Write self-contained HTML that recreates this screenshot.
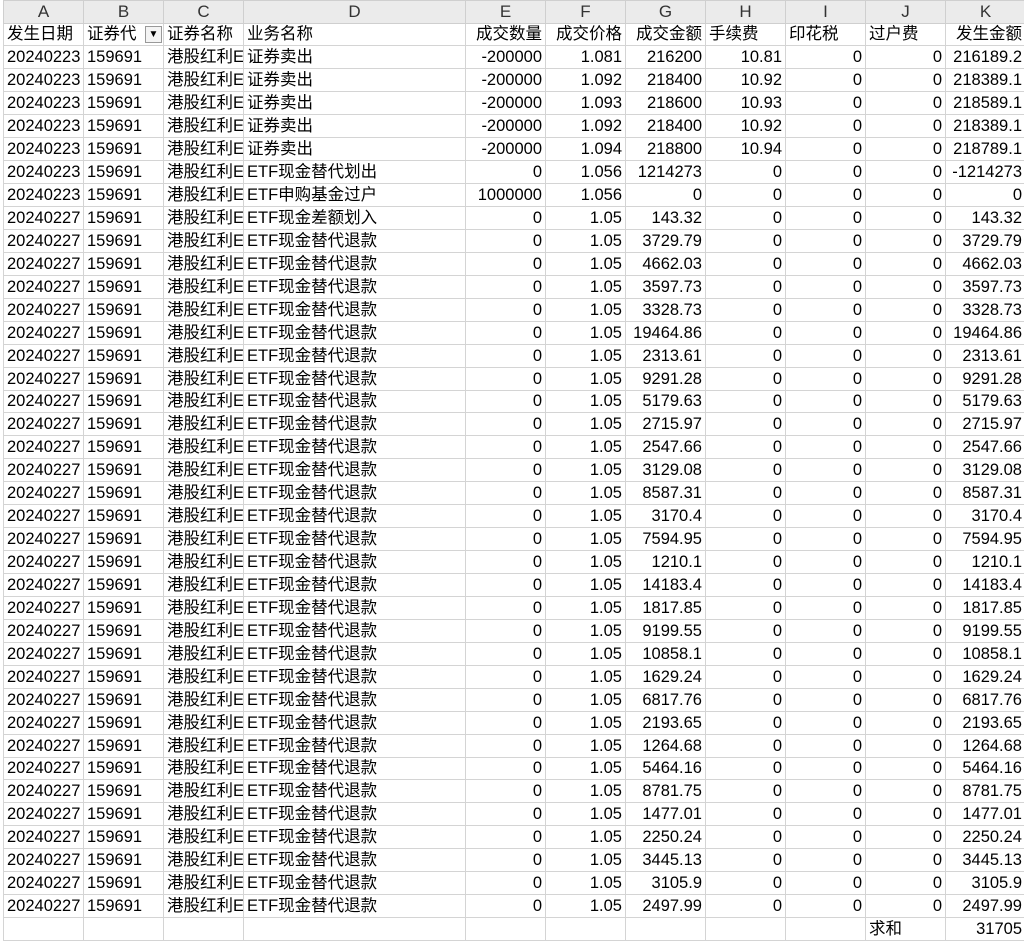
<!DOCTYPE html>
<html><head><meta charset="utf-8"><style>
body{margin:0;background:#fff;overflow:hidden;width:1024px;height:944px}
table{border-collapse:collapse;table-layout:fixed;width:1022px;font-family:"Liberation Sans","Noto Sans CJK SC",sans-serif;font-size:16.5px;color:#000;position:absolute;left:3px;top:0}
td{border:1px solid #d4d4d4;height:22.95px;padding:0 3px 0 3px;white-space:nowrap;overflow:hidden;text-align:right;line-height:20px;box-sizing:border-box}
tr.h td{background:#ebebeb;text-align:center;border-color:#cfcfcf;height:22.5px;color:#333;font-size:17px}
td.l{text-align:left}
td.c{text-overflow:clip;padding-right:0}
.f{position:relative}
.fb{position:absolute;right:1px;top:2px;width:17px;height:17px;border:1px solid #999;background:#f4f4f4;box-sizing:border-box;font-size:10px;line-height:15px;text-align:center}
</style></head><body>
<table>
<colgroup><col style="width:80px"><col style="width:80px"><col style="width:80px"><col style="width:222px"><col style="width:80px"><col style="width:80px"><col style="width:80px"><col style="width:80px"><col style="width:80px"><col style="width:80px"><col style="width:80px"></colgroup>
<tr class="h"><td>A</td><td>B</td><td>C</td><td>D</td><td>E</td><td>F</td><td>G</td><td>H</td><td>I</td><td>J</td><td>K</td></tr>
<tr><td class="l">发生日期</td><td class="l f">证券代<span class="fb">▼</span></td><td class="l">证券名称</td><td class="l">业务名称</td><td>成交数量</td><td>成交价格</td><td>成交金额</td><td class="l">手续费</td><td class="l">印花税</td><td class="l">过户费</td><td>发生金额</td></tr>
<tr><td class="l">20240223</td><td class="l">159691</td><td class="l c">港股红利E</td><td class="l">证券卖出</td><td>-200000</td><td>1.081</td><td>216200</td><td>10.81</td><td>0</td><td>0</td><td>216189.2</td></tr>
<tr><td class="l">20240223</td><td class="l">159691</td><td class="l c">港股红利E</td><td class="l">证券卖出</td><td>-200000</td><td>1.092</td><td>218400</td><td>10.92</td><td>0</td><td>0</td><td>218389.1</td></tr>
<tr><td class="l">20240223</td><td class="l">159691</td><td class="l c">港股红利E</td><td class="l">证券卖出</td><td>-200000</td><td>1.093</td><td>218600</td><td>10.93</td><td>0</td><td>0</td><td>218589.1</td></tr>
<tr><td class="l">20240223</td><td class="l">159691</td><td class="l c">港股红利E</td><td class="l">证券卖出</td><td>-200000</td><td>1.092</td><td>218400</td><td>10.92</td><td>0</td><td>0</td><td>218389.1</td></tr>
<tr><td class="l">20240223</td><td class="l">159691</td><td class="l c">港股红利E</td><td class="l">证券卖出</td><td>-200000</td><td>1.094</td><td>218800</td><td>10.94</td><td>0</td><td>0</td><td>218789.1</td></tr>
<tr><td class="l">20240223</td><td class="l">159691</td><td class="l c">港股红利E</td><td class="l">ETF现金替代划出</td><td>0</td><td>1.056</td><td>1214273</td><td>0</td><td>0</td><td>0</td><td>-1214273</td></tr>
<tr><td class="l">20240223</td><td class="l">159691</td><td class="l c">港股红利E</td><td class="l">ETF申购基金过户</td><td>1000000</td><td>1.056</td><td>0</td><td>0</td><td>0</td><td>0</td><td>0</td></tr>
<tr><td class="l">20240227</td><td class="l">159691</td><td class="l c">港股红利E</td><td class="l">ETF现金差额划入</td><td>0</td><td>1.05</td><td>143.32</td><td>0</td><td>0</td><td>0</td><td>143.32</td></tr>
<tr><td class="l">20240227</td><td class="l">159691</td><td class="l c">港股红利E</td><td class="l">ETF现金替代退款</td><td>0</td><td>1.05</td><td>3729.79</td><td>0</td><td>0</td><td>0</td><td>3729.79</td></tr>
<tr><td class="l">20240227</td><td class="l">159691</td><td class="l c">港股红利E</td><td class="l">ETF现金替代退款</td><td>0</td><td>1.05</td><td>4662.03</td><td>0</td><td>0</td><td>0</td><td>4662.03</td></tr>
<tr><td class="l">20240227</td><td class="l">159691</td><td class="l c">港股红利E</td><td class="l">ETF现金替代退款</td><td>0</td><td>1.05</td><td>3597.73</td><td>0</td><td>0</td><td>0</td><td>3597.73</td></tr>
<tr><td class="l">20240227</td><td class="l">159691</td><td class="l c">港股红利E</td><td class="l">ETF现金替代退款</td><td>0</td><td>1.05</td><td>3328.73</td><td>0</td><td>0</td><td>0</td><td>3328.73</td></tr>
<tr><td class="l">20240227</td><td class="l">159691</td><td class="l c">港股红利E</td><td class="l">ETF现金替代退款</td><td>0</td><td>1.05</td><td>19464.86</td><td>0</td><td>0</td><td>0</td><td>19464.86</td></tr>
<tr><td class="l">20240227</td><td class="l">159691</td><td class="l c">港股红利E</td><td class="l">ETF现金替代退款</td><td>0</td><td>1.05</td><td>2313.61</td><td>0</td><td>0</td><td>0</td><td>2313.61</td></tr>
<tr><td class="l">20240227</td><td class="l">159691</td><td class="l c">港股红利E</td><td class="l">ETF现金替代退款</td><td>0</td><td>1.05</td><td>9291.28</td><td>0</td><td>0</td><td>0</td><td>9291.28</td></tr>
<tr><td class="l">20240227</td><td class="l">159691</td><td class="l c">港股红利E</td><td class="l">ETF现金替代退款</td><td>0</td><td>1.05</td><td>5179.63</td><td>0</td><td>0</td><td>0</td><td>5179.63</td></tr>
<tr><td class="l">20240227</td><td class="l">159691</td><td class="l c">港股红利E</td><td class="l">ETF现金替代退款</td><td>0</td><td>1.05</td><td>2715.97</td><td>0</td><td>0</td><td>0</td><td>2715.97</td></tr>
<tr><td class="l">20240227</td><td class="l">159691</td><td class="l c">港股红利E</td><td class="l">ETF现金替代退款</td><td>0</td><td>1.05</td><td>2547.66</td><td>0</td><td>0</td><td>0</td><td>2547.66</td></tr>
<tr><td class="l">20240227</td><td class="l">159691</td><td class="l c">港股红利E</td><td class="l">ETF现金替代退款</td><td>0</td><td>1.05</td><td>3129.08</td><td>0</td><td>0</td><td>0</td><td>3129.08</td></tr>
<tr><td class="l">20240227</td><td class="l">159691</td><td class="l c">港股红利E</td><td class="l">ETF现金替代退款</td><td>0</td><td>1.05</td><td>8587.31</td><td>0</td><td>0</td><td>0</td><td>8587.31</td></tr>
<tr><td class="l">20240227</td><td class="l">159691</td><td class="l c">港股红利E</td><td class="l">ETF现金替代退款</td><td>0</td><td>1.05</td><td>3170.4</td><td>0</td><td>0</td><td>0</td><td>3170.4</td></tr>
<tr><td class="l">20240227</td><td class="l">159691</td><td class="l c">港股红利E</td><td class="l">ETF现金替代退款</td><td>0</td><td>1.05</td><td>7594.95</td><td>0</td><td>0</td><td>0</td><td>7594.95</td></tr>
<tr><td class="l">20240227</td><td class="l">159691</td><td class="l c">港股红利E</td><td class="l">ETF现金替代退款</td><td>0</td><td>1.05</td><td>1210.1</td><td>0</td><td>0</td><td>0</td><td>1210.1</td></tr>
<tr><td class="l">20240227</td><td class="l">159691</td><td class="l c">港股红利E</td><td class="l">ETF现金替代退款</td><td>0</td><td>1.05</td><td>14183.4</td><td>0</td><td>0</td><td>0</td><td>14183.4</td></tr>
<tr><td class="l">20240227</td><td class="l">159691</td><td class="l c">港股红利E</td><td class="l">ETF现金替代退款</td><td>0</td><td>1.05</td><td>1817.85</td><td>0</td><td>0</td><td>0</td><td>1817.85</td></tr>
<tr><td class="l">20240227</td><td class="l">159691</td><td class="l c">港股红利E</td><td class="l">ETF现金替代退款</td><td>0</td><td>1.05</td><td>9199.55</td><td>0</td><td>0</td><td>0</td><td>9199.55</td></tr>
<tr><td class="l">20240227</td><td class="l">159691</td><td class="l c">港股红利E</td><td class="l">ETF现金替代退款</td><td>0</td><td>1.05</td><td>10858.1</td><td>0</td><td>0</td><td>0</td><td>10858.1</td></tr>
<tr><td class="l">20240227</td><td class="l">159691</td><td class="l c">港股红利E</td><td class="l">ETF现金替代退款</td><td>0</td><td>1.05</td><td>1629.24</td><td>0</td><td>0</td><td>0</td><td>1629.24</td></tr>
<tr><td class="l">20240227</td><td class="l">159691</td><td class="l c">港股红利E</td><td class="l">ETF现金替代退款</td><td>0</td><td>1.05</td><td>6817.76</td><td>0</td><td>0</td><td>0</td><td>6817.76</td></tr>
<tr><td class="l">20240227</td><td class="l">159691</td><td class="l c">港股红利E</td><td class="l">ETF现金替代退款</td><td>0</td><td>1.05</td><td>2193.65</td><td>0</td><td>0</td><td>0</td><td>2193.65</td></tr>
<tr><td class="l">20240227</td><td class="l">159691</td><td class="l c">港股红利E</td><td class="l">ETF现金替代退款</td><td>0</td><td>1.05</td><td>1264.68</td><td>0</td><td>0</td><td>0</td><td>1264.68</td></tr>
<tr><td class="l">20240227</td><td class="l">159691</td><td class="l c">港股红利E</td><td class="l">ETF现金替代退款</td><td>0</td><td>1.05</td><td>5464.16</td><td>0</td><td>0</td><td>0</td><td>5464.16</td></tr>
<tr><td class="l">20240227</td><td class="l">159691</td><td class="l c">港股红利E</td><td class="l">ETF现金替代退款</td><td>0</td><td>1.05</td><td>8781.75</td><td>0</td><td>0</td><td>0</td><td>8781.75</td></tr>
<tr><td class="l">20240227</td><td class="l">159691</td><td class="l c">港股红利E</td><td class="l">ETF现金替代退款</td><td>0</td><td>1.05</td><td>1477.01</td><td>0</td><td>0</td><td>0</td><td>1477.01</td></tr>
<tr><td class="l">20240227</td><td class="l">159691</td><td class="l c">港股红利E</td><td class="l">ETF现金替代退款</td><td>0</td><td>1.05</td><td>2250.24</td><td>0</td><td>0</td><td>0</td><td>2250.24</td></tr>
<tr><td class="l">20240227</td><td class="l">159691</td><td class="l c">港股红利E</td><td class="l">ETF现金替代退款</td><td>0</td><td>1.05</td><td>3445.13</td><td>0</td><td>0</td><td>0</td><td>3445.13</td></tr>
<tr><td class="l">20240227</td><td class="l">159691</td><td class="l c">港股红利E</td><td class="l">ETF现金替代退款</td><td>0</td><td>1.05</td><td>3105.9</td><td>0</td><td>0</td><td>0</td><td>3105.9</td></tr>
<tr><td class="l">20240227</td><td class="l">159691</td><td class="l c">港股红利E</td><td class="l">ETF现金替代退款</td><td>0</td><td>1.05</td><td>2497.99</td><td>0</td><td>0</td><td>0</td><td>2497.99</td></tr>
<tr><td></td><td></td><td></td><td></td><td></td><td></td><td></td><td></td><td></td><td class="l">求和</td><td>31705</td></tr>
</table>
</body></html>
